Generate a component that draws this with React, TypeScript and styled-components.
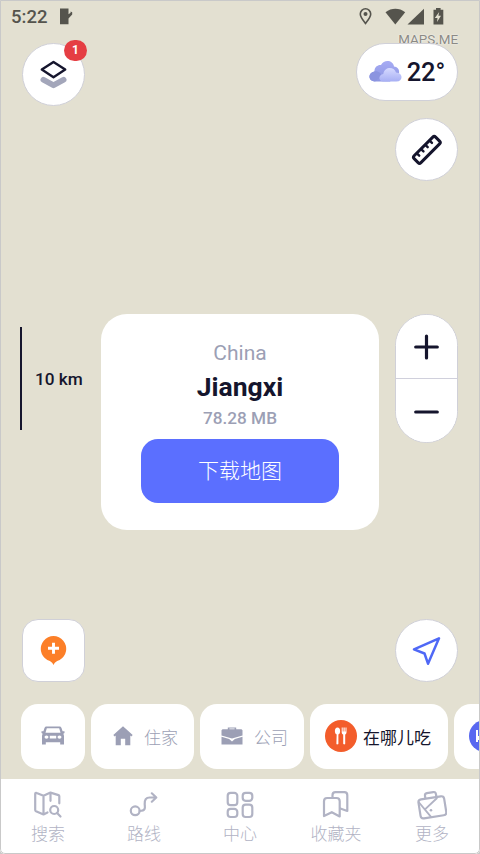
import React from "react";
import styled, { createGlobalStyle, css } from "styled-components";

const INK = "#15152d";
const MUTED = "#9c9fb5";
const BLUE = "#5b6fff";

const Global = createGlobalStyle`
  *, *::before, *::after { box-sizing: border-box; }
  body { margin: 0; background: #c9c9c9; font-family: Roboto, "Noto Sans CJK SC", sans-serif; overflow: hidden; }
  button { font: inherit; border: 0; padding: 0; margin: 0; }
  svg { display: block; flex: none; }
`;

const Screen = styled.main`
  position: relative;
  width: 480px;
  height: 854px;
  display: flex;
  flex-direction: column;
  overflow: hidden;
  background: #e3e0d1;
  border-radius: 0 0 5px 5px;
  &::after {
    content: "";
    position: absolute;
    inset: 0;
    border: 1px solid #c9c9c9;
    border-radius: 0 0 5px 5px;
    pointer-events: none;
  }
`;

const StatusBar = styled.header`
  height: 32px;
  padding: 1px 29px 0 11px;
  display: flex;
  align-items: center;
  color: #55544d;
`;
const Clock = styled.span`
  font-size: 18.5px;
  font-weight: 500;
  line-height: 32px;
  width: 48px;
`;
const StatusIcons = styled.div`
  margin-left: auto;
  display: flex;
  align-items: center;
  gap: 13px;
`;
const Attribution = styled.div`
  height: 11px;
  padding-right: 22px;
  text-align: right;
  font-size: 13.4px;
  line-height: 15px;
  color: #8b8a86;
  text-shadow: 0 0 2px #fff;
`;

const Row = styled.div<{ $height: number; $gapBelow?: number }>`
  height: ${(p) => p.$height}px;
  margin-bottom: ${(p) => p.$gapBelow ?? 0}px;
  padding: 0 22px;
  display: flex;
  justify-content: space-between;
  align-items: flex-start;
`;
const RightStack = styled.div`
  display: flex;
  flex-direction: column;
  align-items: flex-end;
  gap: 17px;
`;

const surface = css`
  background: #fff;
  border: 1px solid #d0d0d8;
  display: flex;
  align-items: center;
  justify-content: center;
  color: ${INK};
`;
const MapButton = styled.button<{ $radius?: number }>`
  ${surface}
  position: relative;
  width: 63px;
  height: 63px;
  border-radius: ${(p) => p.$radius ?? 32}px;
`;
const Badge = styled.span`
  position: absolute;
  top: -4px;
  right: -3px;
  width: 23px;
  height: 21px;
  border-radius: 11px;
  background: #e53e43;
  color: #fff;
  font-size: 12px;
  font-weight: 700;
  line-height: 21px;
  text-align: center;
`;
const Weather = styled.button`
  ${surface}
  width: 102px;
  height: 58px;
  border-radius: 29px;
  gap: 5px;
  font-size: 25.5px;
  font-weight: 500;
`;

const Middle = styled.section`
  height: 216px;
  margin-bottom: 89px;
  padding: 0 21px 0 20px;
  display: flex;
  align-items: flex-start;
`;
const Scale = styled.div`
  width: 81px;
  height: 103px;
  margin-top: 13px;
  padding-left: 13px;
  border-left: 2px solid ${INK};
  display: flex;
  align-items: center;
  font-size: 17.2px;
  font-weight: 500;
  color: ${INK};
  white-space: nowrap;
`;
const Card = styled.article`
  width: 278px;
  height: 216px;
  margin-right: 16px;
  border-radius: 26px;
  background: #fff;
  display: flex;
  flex-direction: column;
  align-items: center;
  padding-top: 25px;
`;
const Country = styled.div`
  font-size: 21px;
  line-height: 28px;
  color: ${MUTED};
`;
const Region = styled.h1`
  margin: 0;
  font-size: 26.5px;
  line-height: 40px;
  font-weight: 700;
  color: ${INK};
`;
const FileSize = styled.div`
  margin-top: -1px;
  font-size: 17.2px;
  line-height: 24px;
  font-weight: 500;
  color: ${MUTED};
`;
const Download = styled.button`
  margin-top: 9px;
  width: 198px;
  height: 64px;
  border-radius: 17px;
  background: ${BLUE};
  color: #fff;
  font-size: 21px;
  font-weight: 300;
  line-height: 64px;
`;
const Zoom = styled.div`
  width: 63px;
  height: 129px;
  border: 1px solid #d0d0d8;
  border-radius: 32px;
  background: #fff;
  overflow: hidden;
`;
const ZoomHalf = styled.button`
  width: 61px;
  height: 63px;
  background: #fff;
  color: ${INK};
  display: flex;
  align-items: center;
  justify-content: center;
  & + & { border-top: 1px solid #d0d0dc; height: 66px; }
`;

const Chips = styled.nav`
  height: 65px;
  margin-bottom: 10px;
  padding-left: 21px;
  display: flex;
  gap: 6px;
`;
const Chip = styled.button<{ $width: number; $active?: boolean; $gap?: number; $left?: number }>`
  flex: none;
  width: ${(p) => p.$width}px;
  height: 65px;
  border-radius: 17px;
  background: #fff;
  display: flex;
  align-items: center;
  padding: 0 0 1px ${(p) => p.$left ?? 20}px;
  gap: ${(p) => p.$gap ?? 10}px;
  white-space: nowrap;
  font-size: 17px;
  font-weight: ${(p) => (p.$active ? 400 : 300)};
  color: ${(p) => (p.$active ? INK : MUTED)};
`;
const Disc = styled.span<{ $color: string }>`
  flex: none;
  width: 32px;
  height: 32px;
  border-radius: 50%;
  background: ${(p) => p.$color};
  display: flex;
  align-items: center;
  justify-content: center;
`;

const TabBar = styled.nav`
  flex: 1;
  background: #fff;
  display: grid;
  grid-template-columns: repeat(5, 1fr);
`;
const Tab = styled.button`
  background: none;
  color: #b1b3c4;
  display: flex;
  flex-direction: column;
  align-items: center;
  padding-top: 11px;
  gap: 1px;
  font-size: 17px;
  font-weight: 300;
  line-height: 26px;
`;

const line = {
  fill: "none",
  stroke: "currentColor",
  strokeWidth: 2.2,
  strokeLinecap: "round",
  strokeLinejoin: "round",
} as const;

const NoteIcon = () => (
  <svg width="14" height="17" viewBox="0 0 14 17" fill="currentColor">
    <path d="M1 .5h8.5v5.800l2.100-1.600V3.600l1.600.6v2.400L9.500 10.500v5.700H1z" />
  </svg>
);
const LocationIcon = () => (
  <svg width="13" height="17" viewBox="0 0 13 17">
    <path d="M6.500 15.500C4 12.200 1.300 9.100 1.300 6a5.200 5.200 0 0 1 10.400 0c0 3.100-2.700 6.200-5.200 9.500z" fill="none" stroke="currentColor" strokeWidth="1.600" />
    <circle cx="6.500" cy="6" r="2" fill="currentColor" />
  </svg>
);
const SignalIcons = () => (
  <svg width="66" height="18" viewBox="0 0 66 18" fill="currentColor">
    <path d="M.5 4.200C6.500-.3 14.200-.3 20.200 4.200L10.300 16.600z" />
    <path d="M39 .8v15.700H22.500z" />
    <path fillRule="evenodd" d="M48.500 1.700h2.500V0h4.600v1.700h2.700v14.800h-9.800V1.700zM54.200 4l-4.400 6h2.700l-.5 4 4-6.200h-2.600z" />
  </svg>
);
const LayersIcon = () => (
  <svg width="28" height="30" viewBox="0 0 28 30">
    <path d="M3.400 19.800 13.500 25.300l10.100-5.500" fill="none" stroke="#a3a6ba" strokeWidth="5.800" strokeLinecap="round" strokeLinejoin="round" />
    <path d="M1.800 9.600 13.500 1.900l11.700 7.700L13.500 17.200z" fill="#fff" stroke="#fff" strokeWidth="5" strokeLinejoin="round" />
    <path d="M1.800 9.600 13.500 1.900l11.700 7.700L13.500 17.200z" fill="#fff" stroke={INK} strokeWidth="2.400" strokeLinejoin="round" />
  </svg>
);
const CloudIcon = () => (
  <svg width="33" height="24" viewBox="0 0 33 24">
    <defs>
      <linearGradient id="back" x2="0" y2="1"><stop stopColor="#a7acf4" /><stop offset="1" stopColor="#8d96e2" /></linearGradient>
      <linearGradient id="front" x2="0" y2="1"><stop stopColor="#d6daff" /><stop offset="1" stopColor="#a7aff4" /></linearGradient>
    </defs>
    <path d="M6 21.500c-6.800 0-7.800-8.700-.6-10.100C5.500 6.500 9.200 4.500 12 5c3-6.300 12.300-4.900 13 1.400 3.800.5 5.700 3.200 5 6.600l-9 8.500z" fill="url(#back)" />
    <path d="M6 21.500c-6.800 0-7.800-8.700-.6-10.100 5.100-.7 7.100 2.600 6.800 5.100z" fill="#8b94e0" />
    <path d="M14.500 21.500c-5.500 0-5.400-6.800-.2-7.600 1.200-7.400 10.800-7.700 12.700-1.400 7.400.4 7.200 9 .4 9z" fill="url(#front)" />
  </svg>
);
const RulerIcon = () => (
  <svg width="32" height="32" viewBox="0 0 32 32">
    <g transform="rotate(-45 16 16)" fill="none" stroke={INK} strokeWidth="3" strokeLinejoin="round" strokeLinecap="round">
      <rect x="0.800" y="11" width="30.400" height="9.600" rx="2" />
      <path d="M6.500 11.500v3M12.500 11.500v3M18.500 11.500v3M24.500 11.500v3" strokeWidth="2.400" />
    </g>
  </svg>
);
const PinIcon = () => (
  <svg width="27" height="31" viewBox="0 0 27 31">
    <path d="M13.500 30c-1.300-3.200-3.400-4-6.200-5.100A12.700 12.700 0 1 1 19.700 24.900c-2.800 1.100-4.900 1.900-6.200 5.100z" fill="#fc7f28" />
    <path d="M13.500 7.700v11M8 13.200h11" stroke="#fff" strokeWidth="2.900" />
  </svg>
);
const NavigateIcon = () => (
  <svg width="29" height="29" viewBox="0 0 29 29" fill="none" stroke="#4f68f6" strokeWidth="2.500" strokeLinejoin="round">
    <path d="M27 2.300 2 13.300l10.500 4.200L16 27.700z" />
  </svg>
);
const CarIcon = () => (
  <svg width="24" height="20" viewBox="0 0 24 20" fill="currentColor">
    <path fillRule="evenodd" d="M5.500.5h13c1.100 0 1.700.6 2.100 1.700l1 3.100H23.500v1.800l-1.200.6c.5.700.7 1.500.7 2.600v8.200h-3.800v-2.300H4.800v2.300H1v-8.200c0-1.100.2-1.900.7-2.600L.5 7.100V5.300h1.900l1-3.100C3.800 1.100 4.400.5 5.500.5zM5.800 2.300 4.500 6.700h15l-1.300-4.400zM5.500 9.400a2 1.700 0 1 0 0 3.400 2 1.700 0 0 0 0-3.400zm13 0a2 1.700 0 1 0 0 3.400 2 1.700 0 0 0 0-3.400zM8.800 9.800v2.800h6.400V9.800z" />
  </svg>
);
const HomeIcon = () => (
  <svg width="20" height="20" viewBox="0 0 20 20" fill="currentColor">
    <path d="M10 .3 19.700 9l-1.400 1.400-1-.8v9.700h-5.100v-6.600H7.800v6.600H2.700V9.600l-1 .8L.3 9z" />
  </svg>
);
const WorkIcon = () => (
  <svg width="22" height="18" viewBox="0 0 22 18" fill="currentColor">
    <path fillRule="evenodd" d="M6.800 2.200V.5h8.400v1.700H20.500l1 1v5.400L11 11.500.5 8.600V3.200l1-1zM8.400 2.200h5.200v-.6H8.400z" />
    <path d="m.5 9.800 7.600 2.300L11 14.600l2.900-2.500 7.600-2.300v7.700H.5z" />
  </svg>
);
const FoodIcon = () => (
  <svg width="14" height="18" viewBox="0 0 14 18" fill="#fff">
    <ellipse cx="3.500" cy="4" rx="2.600" ry="3.500" />
    <path d="M2.700 6h1.700v10.500c0 1.200-2 1.200-2 0zM7.700.5h1v4h.8v-4h1.200v4h.8v-4h1v4.800c0 1.100-.6 1.900-1.300 2.200v9c0 1.200-2 1.200-2 0v-9C8.300 7.200 7.700 6.400 7.700 5.300z" />
  </svg>
);
const BedIcon = () => (
  <svg width="18" height="14" viewBox="0 0 18 14" fill="#fff">
    <path d="M0 1h2v6h2.500l2-3L9 8h9v5h-2v-2H2v2H0z" />
  </svg>
);
const SearchMapIcon = () => (
  <svg width="30" height="30" viewBox="0 0 30 30" {...line}>
    <path d="M14.500 22.500 10.500 24.500 3 21.300c-.6-.3-.8-.7-.8-1.300V4c0-1 .6-1.400 1.500-1L10.500 5.800l7-3.200 8 2.500c.6.200.8.600.8 1.200v7M10.500 5.800v18.700M17.500 2.600v8.200" />
    <circle cx="21.200" cy="20" r="4" />
    <path d="m24.100 23 3.400 3.500" />
  </svg>
);
const RouteIcon = () => (
  <svg width="30" height="30" viewBox="0 0 30 30" {...line}>
    <circle cx="6.200" cy="20.800" r="4.400" />
    <path d="M10.700 21c6.500-.3 5.200-3.500 5-6.800-.2-4.500 1.300-6.700 5-6.700h6.500M22.800 3.300l4.500 4.200-4.500 4.200" />
  </svg>
);
const GridIcon = () => (
  <svg width="30" height="30" viewBox="0 0 30 30" {...line}>
    <rect x="2.700" y="2.800" width="9.600" height="12.400" rx="3" />
    <rect x="17.700" y="2.800" width="9.600" height="8" rx="3" />
    <rect x="2.700" y="18.800" width="9.600" height="8.200" rx="3" />
    <rect x="17.700" y="14.600" width="9.600" height="12.400" rx="3" />
  </svg>
);
const BookmarksIcon = () => (
  <svg width="30" height="30" viewBox="0 0 30 30" {...line}>
    <path d="M3 26V11.200C3 9 4.200 8 6.200 8H15.500c2 0 3.200 1 3.200 3.200V26.500l-7.900-4.300z" />
    <path d="M11.500 7.500V5.200c0-2 1-3 3-3h8.800c2 0 3 1 3 3v15.800l-7-2.500" />
  </svg>
);
const BagIcon = () => (
  <svg width="30" height="30" viewBox="0 0 30 30" {...line}>
    <g transform="rotate(-9 15 15)">
      <rect x="2" y="7.800" width="26" height="19.200" rx="3" />
      <path d="M9.500 7V4.800c0-1.500.8-2.400 2.300-2.400h6.500c1.500 0 2.300.9 2.300 2.400V7" />
    </g>
    <path d="M2 12.500 13.800 26.600M19.800 8.300 8 19.400" strokeWidth="1.900" />
    <circle cx="14" cy="20.300" r="1.300" fill="currentColor" stroke="none" />
  </svg>
);

const tabs = [
  { label: "搜索", Icon: SearchMapIcon },
  { label: "路线", Icon: RouteIcon },
  { label: "中心", Icon: GridIcon },
  { label: "收藏夹", Icon: BookmarksIcon },
  { label: "更多", Icon: BagIcon },
];

export default function App() {
  return (
    <>
      <Global />
      <Screen>
        <StatusBar>
          <Clock>5:22</Clock>
          <NoteIcon />
          <StatusIcons>
            <LocationIcon />
            <SignalIcons />
          </StatusIcons>
        </StatusBar>
        <Attribution>MAPS.ME</Attribution>
        <Row $height={271}>
          <MapButton aria-label="Layers">
            <LayersIcon />
            <Badge>1</Badge>
          </MapButton>
          <RightStack>
            <Weather><CloudIcon />22°</Weather>
            <MapButton aria-label="Measure"><RulerIcon /></MapButton>
          </RightStack>
        </Row>
        <Middle>
          <Scale>10 km</Scale>
          <Card>
            <Country>China</Country>
            <Region>Jiangxi</Region>
            <FileSize>78.28 MB</FileSize>
            <Download>下载地图</Download>
          </Card>
          <Zoom>
            <ZoomHalf aria-label="Zoom in">
              <svg width="25" height="26" viewBox="0 0 25 26" {...line} strokeWidth={3.2}><path d="M12.500 2v22M1.700 13h21.600" /></svg>
            </ZoomHalf>
            <ZoomHalf aria-label="Zoom out">
              <svg width="25" height="26" viewBox="0 0 25 26" {...line} strokeWidth={3.2}><path d="M1.700 13h21.600" /></svg>
            </ZoomHalf>
          </Zoom>
        </Middle>
        <Row $height={63} $gapBelow={22}>
          <MapButton $radius={16} aria-label="Add place"><PinIcon /></MapButton>
          <MapButton aria-label="My location"><NavigateIcon /></MapButton>
        </Row>
        <Chips>
          <Chip $width={64}><CarIcon /></Chip>
          <Chip $width={103} $left={22} $gap={11}><HomeIcon />住家</Chip>
          <Chip $width={104} $left={21} $gap={11}><WorkIcon />公司</Chip>
          <Chip $width={138} $left={15} $gap={6} $active><Disc $color="#f35d2b"><FoodIcon /></Disc>在哪儿吃</Chip>
          <Chip $width={138} $left={15}><Disc $color="#5868f0"><BedIcon /></Disc></Chip>
        </Chips>
        <TabBar>
          {tabs.map(({ label, Icon }) => (
            <Tab key={label}><Icon />{label}</Tab>
          ))}
        </TabBar>
      </Screen>
    </>
  );
}
